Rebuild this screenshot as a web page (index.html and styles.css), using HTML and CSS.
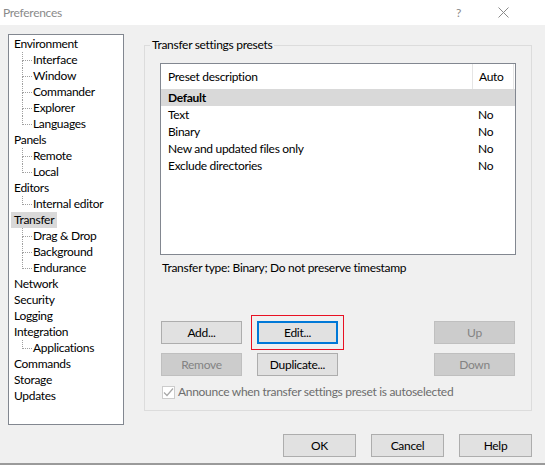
FILE: index.html
```html
<!DOCTYPE html>
<html lang="en">
<head>
  <meta charset="UTF-8" />
  <title>Preferences</title>
  <link rel="stylesheet" href="styles.css">
</head>
<body>
  <div class="window">
    <div class="titlebar">
      <span class="title">Preferences</span>
      <span class="help">?</span>
      <svg class="close" width="11" height="11" viewBox="0 0 11 11">
        <path d="M0.5 0.5 L10.5 10.5 M10.5 0.5 L0.5 10.5" stroke="#8a8a8a" stroke-width="1" fill="none"/>
      </svg>
    </div>

    <div class="main">
      <div class="tree">
        <div class="node"><span>Environment</span></div>
        <div class="node child"><span>Interface</span></div>
        <div class="node child"><span>Window</span></div>
        <div class="node child"><span>Commander</span></div>
        <div class="node child"><span>Explorer</span></div>
        <div class="node child last"><span>Languages</span></div>
        <div class="node"><span>Panels</span></div>
        <div class="node child"><span>Remote</span></div>
        <div class="node child last"><span>Local</span></div>
        <div class="node"><span>Editors</span></div>
        <div class="node child last"><span>Internal editor</span></div>
        <div class="node selected"><span>Transfer</span></div>
        <div class="node child"><span>Drag &amp; Drop</span></div>
        <div class="node child"><span>Background</span></div>
        <div class="node child last"><span>Endurance</span></div>
        <div class="node"><span>Network</span></div>
        <div class="node"><span>Security</span></div>
        <div class="node"><span>Logging</span></div>
        <div class="node"><span>Integration</span></div>
        <div class="node child last"><span>Applications</span></div>
        <div class="node"><span>Commands</span></div>
        <div class="node"><span>Storage</span></div>
        <div class="node"><span>Updates</span></div>
      </div>

      <div class="group">
        <div class="legend">Transfer settings presets</div>

        <div class="listview">
          <div class="lv-head">
            <div class="col-desc">Preset description</div>
            <div class="col-auto">Auto</div>
          </div>
          <div class="lv-row active"><div class="col-desc">Default</div><div class="col-auto"></div></div>
          <div class="lv-row"><div class="col-desc">Text</div><div class="col-auto">No</div></div>
          <div class="lv-row"><div class="col-desc">Binary</div><div class="col-auto">No</div></div>
          <div class="lv-row"><div class="col-desc">New and updated files only</div><div class="col-auto">No</div></div>
          <div class="lv-row"><div class="col-desc">Exclude directories</div><div class="col-auto">No</div></div>
        </div>

        <div class="info">Transfer type: Binary; Do not preserve timestamp</div>

        <div class="btn-row first">
          <button class="btn">Add...</button>
          <div class="marked"><button class="btn focused">Edit...</button></div>
          <span class="spacer"></span>
          <button class="btn" disabled>Up</button>
        </div>
        <div class="btn-row">
          <button class="btn" disabled>Remove</button>
          <button class="btn">Duplicate...</button>
          <span class="spacer"></span>
          <button class="btn" disabled>Down</button>
        </div>

        <label class="check">
          <span class="box">
            <svg width="11" height="11" viewBox="0 0 11 11">
              <path d="M1 5.5 L4 8.5 L10 1.5" stroke="#a8a8a8" stroke-width="1.2" fill="none"/>
            </svg>
          </span>
          Announce when transfer settings preset is autoselected
        </label>
      </div>
    </div>

    <div class="footer">
      <button class="btn dlg">OK</button>
      <button class="btn dlg">Cancel</button>
      <button class="btn dlg">Help</button>
    </div>
  </div>
</body>
</html>
```

FILE: styles.css
```css
body {
  margin: 0;
  font-family: Lato, "Noto Sans", sans-serif;
  font-size: 12px;
  letter-spacing: -0.3px;
  color: #000;
}

.window {
  width: 545px;
  height: 465px;
  background: #f0f0f0;
  display: flex;
  flex-direction: column;
  box-sizing: border-box;
  border-bottom: 2px solid #9a9a9a;
  overflow: hidden;
}

.titlebar {
  height: 25px;
  background: #fff;
  display: flex;
  align-items: center;
  padding-left: 3px;
  color: #8a8a8a;
}

.title {
  flex: 1;
}

.help {
  margin-right: 37px;
}

.close {
  margin-right: 36px;
}

.main {
  display: flex;
  align-items: flex-start;
  padding: 9px 0 0 8px;
}

/* tree on the left */
.tree {
  width: 116px;
  height: 391px;
  box-sizing: border-box;
  border: 1px solid #828790;
  background: #fff;
  padding-top: 1px;
}

.node {
  position: relative;
  height: 16px;
  line-height: 16px;
  padding-left: 2px;
  white-space: nowrap;
}

.node span {
  padding: 0 3px;
}

.node.selected span {
  background: #d9d9d9;
  display: inline-block;
  height: 16px;
}

.node.child {
  padding-left: 21px;
}

.node.child::before {
  content: "";
  position: absolute;
  left: 13px;
  top: 0;
  width: 9px;
  height: 8px;
  border-left: 1px dotted #a0a0a0;
  border-bottom: 1px dotted #a0a0a0;
}

.node.child::after {
  content: "";
  position: absolute;
  left: 13px;
  top: 8px;
  bottom: 0;
  border-left: 1px dotted #a0a0a0;
}

.node.child.last::after {
  display: none;
}

/* group box */
.group {
  width: 388px;
  height: 366px;
  box-sizing: border-box;
  margin: 11px 0 0 20px;
  border: 1px solid #dcdcdc;
  padding: 0 15px 0 15px;
  display: flex;
  flex-direction: column;
  align-items: flex-start;
}

.legend {
  margin: -9px 0 0 -10px;
  padding: 0 2px;
  line-height: 16px;
  background: #f0f0f0;
}

.listview {
  margin-top: 10px;
  width: 356px;
  height: 192px;
  box-sizing: border-box;
  border: 1px solid #828790;
  background: #fff;
}

.lv-head, .lv-row {
  display: flex;
}

.lv-head {
  height: 25px;
  line-height: 25px;
}

.lv-head .col-desc {
  border-right: 1px solid #e5e5e5;
}

.lv-head .col-auto {
  border-right: 1px solid #e5e5e5;
}

.lv-row {
  height: 17px;
  line-height: 17px;
}

.lv-row.active {
  background: #d9d9d9;
  font-weight: bold;
}

.col-desc {
  width: 304px;
  padding-left: 7px;
}

.col-auto {
  width: 34px;
  padding-left: 6px;
}

.info {
  margin-top: 5px;
  line-height: 16px;
  padding-left: 2px;
}

.btn-row {
  display: flex;
  width: 354px;
  gap: 15px;
  margin-left: 1px;
  margin-top: 9px;
}

.btn-row.first {
  margin-top: 45px;
}

.spacer {
  flex: 1;
}

.btn {
  width: 81px;
  height: 23px;
  box-sizing: border-box;
  border: 1px solid #adadad;
  background: #e1e1e1;
  font-family: inherit;
  font-size: 12px;
  letter-spacing: inherit;
  color: #000;
  padding: 0;
}

.btn:disabled {
  background: #cccccc;
  border-color: #bfbfbf;
  color: #838383;
}

.btn.focused {
  border: 2px solid #0078d7;
  display: block;
}

/* red annotation frame around the Edit button */
.marked {
  margin: -5px;
  padding: 5px;
  box-shadow: 0 0 0 1px rgb(232, 17, 35);
}

.check {
  display: flex;
  align-items: center;
  margin: 8px 0 0 2px;
  line-height: 16px;
  color: #6d6d6d;
}

.box {
  width: 13px;
  height: 13px;
  box-sizing: border-box;
  border: 1px solid #cccccc;
  background: #fff;
  margin-right: 3px;
  display: flex;
  align-items: center;
  justify-content: center;
}

.footer {
  display: flex;
  justify-content: flex-end;
  gap: 15px;
  padding-right: 13px;
  margin-top: 9px;
}

.btn.dlg {
  width: 73px;
}
```
